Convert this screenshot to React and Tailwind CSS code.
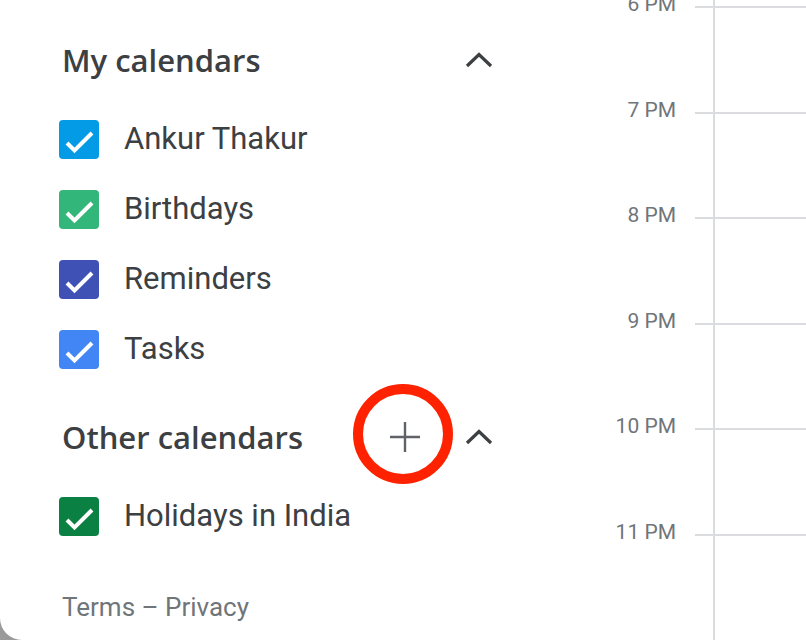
import React from 'react';

const myCalendars = [
  { name: 'Ankur Thakur', color: 'bg-[#039be5]' },
  { name: 'Birthdays', color: 'bg-[#33b679]' },
  { name: 'Reminders', color: 'bg-[#3f51b5]' },
  { name: 'Tasks', color: 'bg-[#4285f4]' },
];

const hours = ['6 PM', '7 PM', '8 PM', '9 PM', '10 PM', '11 PM'];

const Check = ({ color }) => (
  <div className={`w-[40px] h-[39px] rounded-[4px] ${color} flex items-center justify-center shrink-0`}>
    <svg width="40" height="39" viewBox="0 0 40 39">
      <polyline points="8,23 15.5,30.5 33,13" fill="none" stroke="white" strokeWidth="4" />
    </svg>
  </div>
);

const Chevron = () => (
  <div className="w-[40px] h-[40px] flex items-center justify-center">
    <svg width="28" height="16" viewBox="0 0 28 16">
      <polyline points="2,14 14,2.5 26,14" fill="none" stroke="#3c4043" strokeWidth="3.2" />
    </svg>
  </div>
);

const CalendarRow = ({ name, color }) => (
  <div className="h-[70px] -ml-[3px] flex items-center gap-[25px]">
    <Check color={color} />
    <span className="text-[31px] text-[#3c4043]" style={{ fontFamily: 'Roboto, sans-serif' }}>{name}</span>
  </div>
);

export default function App() {
  return (
    <div className="w-[806px] h-[640px] bg-[#9a9a9a] overflow-hidden">
      <div className="w-full h-full bg-white rounded-bl-[22px] flex">
        {/* Sidebar */}
        <div className="w-[560px] pl-[62px] flex flex-col">
          <div className="mt-[30px] h-[60px] w-[437px] flex items-center justify-between">
            <span className="text-[31px] font-semibold text-[#3c4043]" style={{ fontFamily: '"Open Sans", sans-serif' }}>My calendars</span>
            <Chevron />
          </div>
          <div className="mt-[14px]">
            {myCalendars.map((c) => (
              <CalendarRow key={c.name} {...c} />
            ))}
          </div>
          <div className="mt-[9px] h-[88px] w-[437px] flex items-center">
            <span className="flex-1 text-[31px] font-semibold text-[#3c4043]" style={{ fontFamily: '"Open Sans", sans-serif' }}>Other calendars</span>
            <div className="relative w-[40px] h-[40px] flex items-center justify-center">
              <svg width="32" height="32" viewBox="0 0 32 32">
                <path d="M16 1v30M1 16h30" stroke="#5f6368" strokeWidth="2.4" />
              </svg>
              <div className="absolute left-[-32px] top-[-33px] w-[100px] h-[100px] rounded-full border-[10px] border-[#ff2200]" />
            </div>
            <div className="w-[34px]" />
            <Chevron />
          </div>
          <CalendarRow name="Holidays in India" color="bg-[#0b8043]" />
          <div className="mt-[41px] text-[26px] leading-[30px] text-[#70757a]" style={{ fontFamily: 'Roboto, sans-serif' }}>
            Terms – Privacy
          </div>
        </div>

        {/* Time grid */}
        <div className="flex-1 flex">
          <div className="w-[135px] -mt-[8px] text-[#70757a] text-[21px]" style={{ fontFamily: 'Roboto, sans-serif' }}>
            {hours.map((h) => (
              <div key={h} className="h-[105.6px] leading-[24px] text-right pr-[19px]">{h}</div>
            ))}
          </div>
          <div className="w-[18px] pt-[6px]">
            {hours.map((h) => (
              <div key={h} className="h-[105.6px] border-t-2 border-[#dadce0]" />
            ))}
          </div>
          <div className="flex-1 border-l-2 border-[#dadce0] pt-[6px]">
            {hours.map((h) => (
              <div key={h} className="h-[105.6px] border-t-2 border-[#dadce0]" />
            ))}
          </div>
        </div>
      </div>
    </div>
  );
}
